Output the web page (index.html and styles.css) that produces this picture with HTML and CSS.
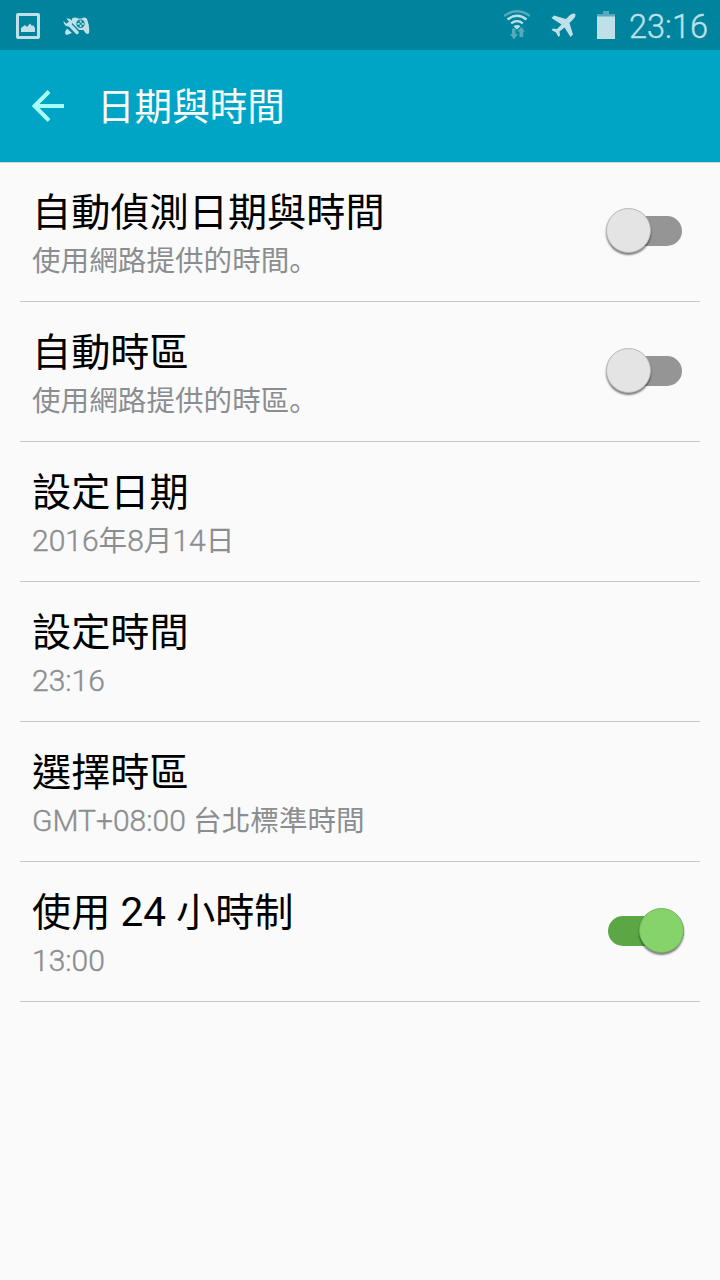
FILE: index.html
```html
<!DOCTYPE html>
<html lang="zh-Hant">
<head>
<meta charset="utf-8">
<title>日期與時間</title>
<link rel="stylesheet" href="styles.css">
</head>
<body>
<div class="status-bar">
  <svg class="icon-picture" width="24" height="26" viewBox="0 0 24 26">
    <path fill-rule="evenodd" d="M2 0H22Q24 0 24 2V24Q24 26 22 26H2Q0 26 0 24V2Q0 0 2 0ZM3 3V23H21V3Z"/>
    <path d="M5 19V15L9 12L11 14L14 10.500L16 13L17 12L19 15V19Z"/>
  </svg>
  <svg class="icon-game" width="28" height="20" viewBox="0 0 28 20">
    <path d="M9 1.500Q12-.3 15 1.500H19Q22-.5 24 2Q27 10 26 16Q24 19 20.500 13H16L9 6Z"/>
    <path d="M4 11.500L9 16L5 17.500Q2 19 2 15Z"/>
    <circle class="cutout" cx="17.500" cy="6.700" r="4.200"/>
    <path d="M16.700 3.500h1.800v2.200h-1.800zM16.700 7.800h1.800V10h-1.800zM14.300 5.900h2.200v1.800h-2.200zM18.700 5.900h2.200v1.800h-2.200z"/>
    <path class="wrench-gap" d="M6 7L14 15.500"/>
    <path class="wrench" d="M6 7L14 15.500"/>
    <path d="M.3 4L3.500 6.800L6 4.800L3.500 1.500Q8 1 9.300 4.500Q9.500 8 6 9.500Q1 9.500 .3 4Z"/>
  </svg>
  <svg class="icon-wifi" width="28" height="30" viewBox="0 0 28 30">
    <path class="arc dim" d="M1.200 6Q14-3.500 26.800 6"/>
    <path class="arc" d="M4.500 9.500Q14 2 23.500 9.500M8.200 13.300Q14 9 19.800 13.300"/>
    <path d="M10.500 16.300Q14 13.500 17.500 16.300L14 19.500Z"/>
    <path class="dim-fill" d="M9 18.500h3.500v5.500h2.500l-4 5.500-4-5.500h2ZM16.500 27v-5.500h-2.200l3.900-4.500 4 4.500h-2V27Z"/>
  </svg>
  <svg class="icon-plane" width="25" height="25" viewBox="0 0 25 25">
    <path d="M24 .8Q25.500 3 22.500 6L18.500 10L22 21.500L19.500 24L13.500 14.500L8.500 18.500L9 22.500L7.500 24L5 19.500L.5 17L2 15.500L6 16L10.500 11.500L.5 5L3 2.500L15 6L19 2Q22-.3 24 .8Z"/>
  </svg>
  <svg class="icon-battery" width="18" height="28" viewBox="0 0 18 28">
    <path class="dim-fill" d="M6 0h6v3h6v3H0V3h6z"/>
    <path d="M0 5.500h18V28H0z"/>
  </svg>
  <span class="clock">23:16</span>
</div>
<header class="app-bar">
  <svg class="back" width="33" height="32" viewBox="0 0 33 32">
    <path d="M17 1.500L2.500 16L17 30.500M2.500 16H32"/>
  </svg>
  <h1 class="heading">日期與時間</h1>
</header>
<main class="settings">
  <section class="row">
    <div><h2 class="title">自動偵測日期與時間</h2><p class="summary">使用網路提供的時間<span lang="ja">。</span></p></div>
    <span class="switch"><span class="thumb"></span></span>
  </section>
  <section class="row">
    <div><h2 class="title">自動時區</h2><p class="summary">使用網路提供的時區<span lang="ja">。</span></p></div>
    <span class="switch"><span class="thumb"></span></span>
  </section>
  <section class="row">
    <div><h2 class="title">設定日期</h2><p class="summary"><span class="latin">2016</span>年<span class="latin">8</span>月<span class="latin">14</span>日</p></div>
  </section>
  <section class="row">
    <div><h2 class="title">設定時間</h2><p class="summary"><span class="latin">23:16</span></p></div>
  </section>
  <section class="row">
    <div><h2 class="title">選擇時區</h2><p class="summary"><span class="latin">GMT+08:00 </span>台北標準時間</p></div>
  </section>
  <section class="row">
    <div><h2 class="title">使用<span class="latin"> 24 </span>小時制</h2><p class="summary"><span class="latin">13:00</span></p></div>
    <span class="switch on"><span class="thumb"></span></span>
  </section>
</main>
</body>
</html>
```
FILE: styles.css
```css
* { box-sizing: border-box; }
body {
  margin: 0;
  min-height: 1280px;
  background: #fafafa;
  font-family: "Noto Sans CJK JP", sans-serif;
}
h1, h2, p { margin: 0; font-weight: 400; white-space: nowrap; }
.status-bar {
  display: flex;
  align-items: flex-start;
  height: 50px;
  padding: 0 12px 0 16px;
  background: #00849e;
  fill: #bfe0e7;
}
.icon-picture { margin-top: 13px; }
.icon-game { margin: 17px 0 0 23px; }
.cutout { fill: #00849e; }
.wrench-gap, .wrench { fill: none; stroke: #00849e; stroke-width: 5.5; stroke-linecap: round; }
.wrench { stroke: #bfe0e7; stroke-width: 3.5; }
.icon-wifi { margin: 10px 0 0 auto; }
.arc { fill: none; stroke: #bfe0e7; stroke-width: 2.3; }
.dim { stroke: #55abbd; }
.dim-fill { fill: #55abbd; }
.icon-plane { margin: 13px 0 0 20px; }
.icon-battery { margin: 11px 0 0 21px; }
.clock {
  width: 79px;
  margin-left: 14px;
  font: 300 32.5px/54px Roboto, sans-serif;
  -webkit-text-stroke: .4px #bfe0e7;
  color: #bfe0e7;
  white-space: nowrap;
}
.app-bar {
  display: flex;
  align-items: center;
  height: 112px;
  padding-left: 32px;
  background: #00a5c5;
}
.back { fill: none; stroke: #a7fff5; stroke-width: 4; }
.heading { margin: -4px 0 0 32px; font-size: 37.6px; line-height: 50px; color: #fafafa; }
.settings { padding: 0 20px; box-shadow: inset 0 1px #ccd5d7; }
.row {
  display: flex;
  justify-content: space-between;
  height: 140px;
  padding: 22px 16px 0 12px;
  border-bottom: 1px solid #c8c8c8;
}
.title { font-size: 39.2px; line-height: 50px; color: #000; }
.summary { margin-top: 2px; font-size: 28.6px; line-height: 46px; color: #8b8e90; }
.latin { font-family: Roboto, sans-serif; white-space: pre; }
.title .latin { font-size: 40.5px; line-height: 1; }
.summary .latin {
  font-size: 30px;
  font-weight: 300;
  line-height: 1;
  -webkit-text-stroke: .4px #8b8e90;
}
.switch {
  display: flex;
  align-items: center;
  width: 76px;
  height: 30px;
  margin: 32px 2px 0 0;
  border-radius: 15px;
  background: linear-gradient(90deg, transparent 20px, #959595 20px);
}
.thumb {
  flex: none;
  width: 45px;
  height: 45px;
  margin-bottom: 1px;
  border: 1px solid #bababa;
  border-radius: 50%;
  background: #e4e4e4;
  box-shadow: 0 2px 2px rgba(0, 0, 0, .5);
}
.on { justify-content: flex-end; margin-right: 0; background: #5ba745; }
.on .thumb { border-color: #75b65f; background: #86d36c; }
```
